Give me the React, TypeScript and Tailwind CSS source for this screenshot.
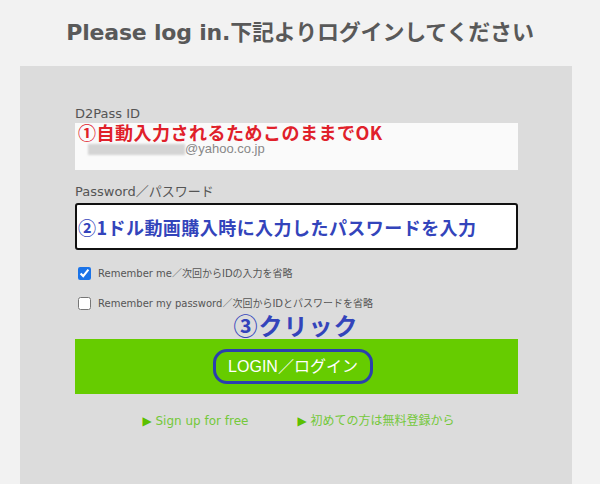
import React from "react";

const jp = '"DejaVu Sans", "Noto Sans CJK JP", sans-serif';
const jpBold = '"Noto Sans CJK JP", "DejaVu Sans", sans-serif';

export default function App() {
  return (
    <div className="min-h-[484px] w-[600px] overflow-hidden bg-[#f2f2f2]" style={{ fontFamily: jp }}>
      <h1 className="pt-[19px] text-center text-[22px] font-bold leading-[28px] tracking-[-0.2px] text-[#595959]">
        Please log in.下記よりログインしてください
      </h1>
      <div className="mx-[20px] mt-[19px] h-[418px] w-[552px] bg-[#dcdcdc] px-[55px] pt-[40px]">
        <div className="text-[13px] leading-[16px] text-[#555]">D2Pass ID</div>
        <div className="relative mt-[1px] h-[47px] w-[443px] bg-[#fafafa]">
          <div
            className="absolute left-[3px] top-[0px] text-[18px] font-bold leading-[18px] tracking-[0.5px] text-[#e0202a]"
            style={{ fontFamily: jpBold }}
          >
            ①自動入力されるためこのままでOK
          </div>
          <div className="flex items-center pl-[13px] pt-[18px]">
            <div className="h-[11px] w-[97px] bg-[#d4d4d4] blur-[1px]" />
            <span className="text-[13px] leading-[16px] text-[#888]" style={{ fontFamily: '"Liberation Sans", Arial, sans-serif' }}>
              @yahoo.co.jp
            </span>
          </div>
        </div>
        <div className="mt-[14px] text-[13px] leading-[16px] text-[#555]">Password／パスワード</div>
        <div className="mt-[3px] flex h-[47px] w-[443px] items-center rounded-[3px] border-2 border-[#111] bg-white pl-[1px]">
          <span
            className="text-[18px] font-bold leading-[24px] tracking-[0.45px] text-[#3344bb]"
            style={{ fontFamily: jpBold }}
          >
            ②1ドル動画購入時に入力したパスワードを入力
          </span>
        </div>
        <label className="mt-[15px] flex h-[16px] items-center gap-[7px] pl-[3px] text-[10px] text-[#555]">
          <input type="checkbox" defaultChecked className="m-0 h-[13px] w-[13px] accent-[#1a73e8]" />
          <span>Remember me／次回からIDの入力を省略</span>
        </label>
        <label className="mt-[14px] flex h-[16px] items-center gap-[7px] pl-[3px] text-[10px] text-[#555]">
          <input type="checkbox" className="m-0 h-[13px] w-[13px]" />
          <span>Remember my password／次回からIDとパスワードを省略</span>
        </label>
        <div
          className="text-center text-[24px] font-bold leading-[28px] tracking-[1px] text-[#3344bb]"
          style={{ fontFamily: jpBold }}
        >
          ③クリック
        </div>
        <div className="flex h-[55px] w-[443px] items-center justify-center bg-[#66cc00]">
          <div className="mr-[7px] flex h-[35px] w-[160px] items-center justify-center rounded-[14px] border-[3px] border-[#2b3fae]">
            <span className="text-[16px] leading-[20px] text-white" style={{ fontFamily: '"Liberation Sans", Arial, "Noto Sans CJK JP", sans-serif' }}>
              LOGIN／ログイン
            </span>
          </div>
        </div>
        <div className="mt-[19px] flex justify-center gap-[49px] pl-[5px] text-[12px] leading-[16px] text-[#74c83a]">
          <span>
            <span className="text-[#5cc000]">▶</span> Sign up for free
          </span>
          <span>
            <span className="text-[#5cc000]">▶</span> 初めての方は無料登録から
          </span>
        </div>
      </div>
    </div>
  );
}
